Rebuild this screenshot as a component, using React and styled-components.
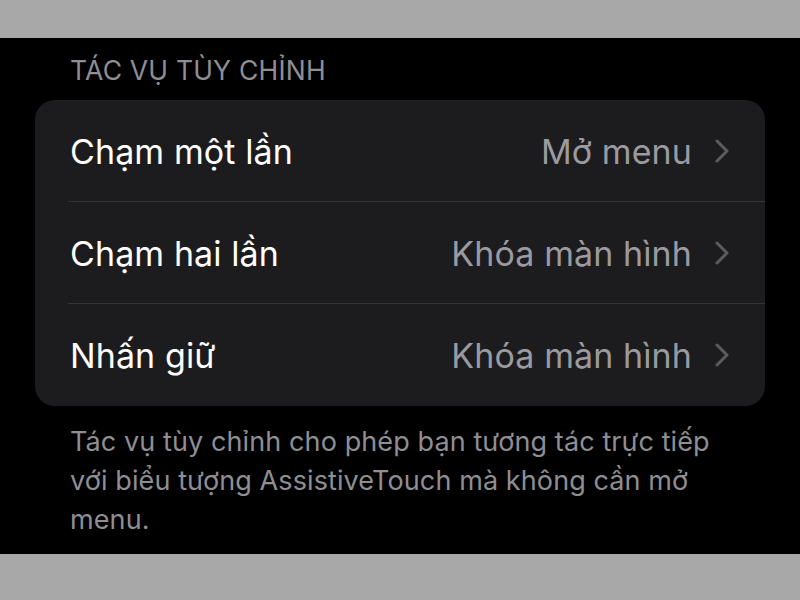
import React from "react";
import styled, { createGlobalStyle } from "styled-components";

const Global = createGlobalStyle`
  html, body { margin: 0; padding: 0; background: #a8a8a8; }
  body { font-family: Inter, "Noto Sans", "DejaVu Sans", sans-serif; -webkit-font-smoothing: antialiased; }
`;

const Page = styled.div`
  width: 800px;
  height: 600px;
  display: flex;
  flex-direction: column;
  background: #a8a8a8;
`;

const Band = styled.div`
  height: ${(p) => p.$h}px;
  background: #a8a8a8;
  flex: none;
`;

const Screen = styled.main`
  height: 516px;
  flex: none;
  background: #000;
  padding: 0 35px;
  box-sizing: border-box;
  display: flex;
  flex-direction: column;
`;

const SectionHeader = styled.h2`
  margin: 0;
  padding: 15px 0 0 35px;
  height: 62px;
  box-sizing: border-box;
  font-size: 26.5px;
  font-weight: 400;
  line-height: 34px;
  color: #8e8e93;
  letter-spacing: 0.2px;
`;

const Card = styled.section`
  background: #1c1c1e;
  border-radius: 20px;
  overflow: hidden;
`;

const Row = styled.div`
  height: 102px;
  display: flex;
  align-items: center;
  padding: 0 35px 0 35px;
  position: relative;
  &:not(:last-child)::after {
    content: "";
    position: absolute;
    left: 33px;
    right: 0;
    bottom: 0;
    height: 1px;
    background: #343436;
  }
`;

const Label = styled.span`
  flex: 1;
  font-size: 34px;
  color: #fff;
  letter-spacing: 0.1px;
`;

const Value = styled.span`
  font-size: 34px;
  color: #9a9aa0;
  margin-right: 22px;
  letter-spacing: 0.1px;
`;

const Chevron = () => (
  <svg width="16" height="24" viewBox="0 0 16 24" fill="none">
    <path d="M3 2 L13 12 L3 22" stroke="#5c5c60" strokeWidth="3" strokeLinecap="round" strokeLinejoin="round" />
  </svg>
);

const Footer = styled.p`
  margin: 0;
  padding: 16px 35px 0 35px;
  font-size: 27px;
  line-height: 39px;
  color: #8e8e93;
  letter-spacing: 0.1px;
`;

const rows = [
  { label: "Chạm một lần", value: "Mở menu" },
  { label: "Chạm hai lần", value: "Khóa màn hình" },
  { label: "Nhấn giữ", value: "Khóa màn hình" },
];

export default function App() {
  return (
    <Page>
      <Global />
      <Band $h={38} />
      <Screen>
        <SectionHeader>TÁC VỤ TÙY CHỈNH</SectionHeader>
        <Card>
          {rows.map((r) => (
            <Row key={r.label}>
              <Label>{r.label}</Label>
              <Value>{r.value}</Value>
              <Chevron />
            </Row>
          ))}
        </Card>
        <Footer>
          Tác vụ tùy chỉnh cho phép bạn tương tác trực tiếp với biểu tượng AssistiveTouch mà không cần mở menu.
        </Footer>
      </Screen>
      <Band $h={46} />
    </Page>
  );
}
